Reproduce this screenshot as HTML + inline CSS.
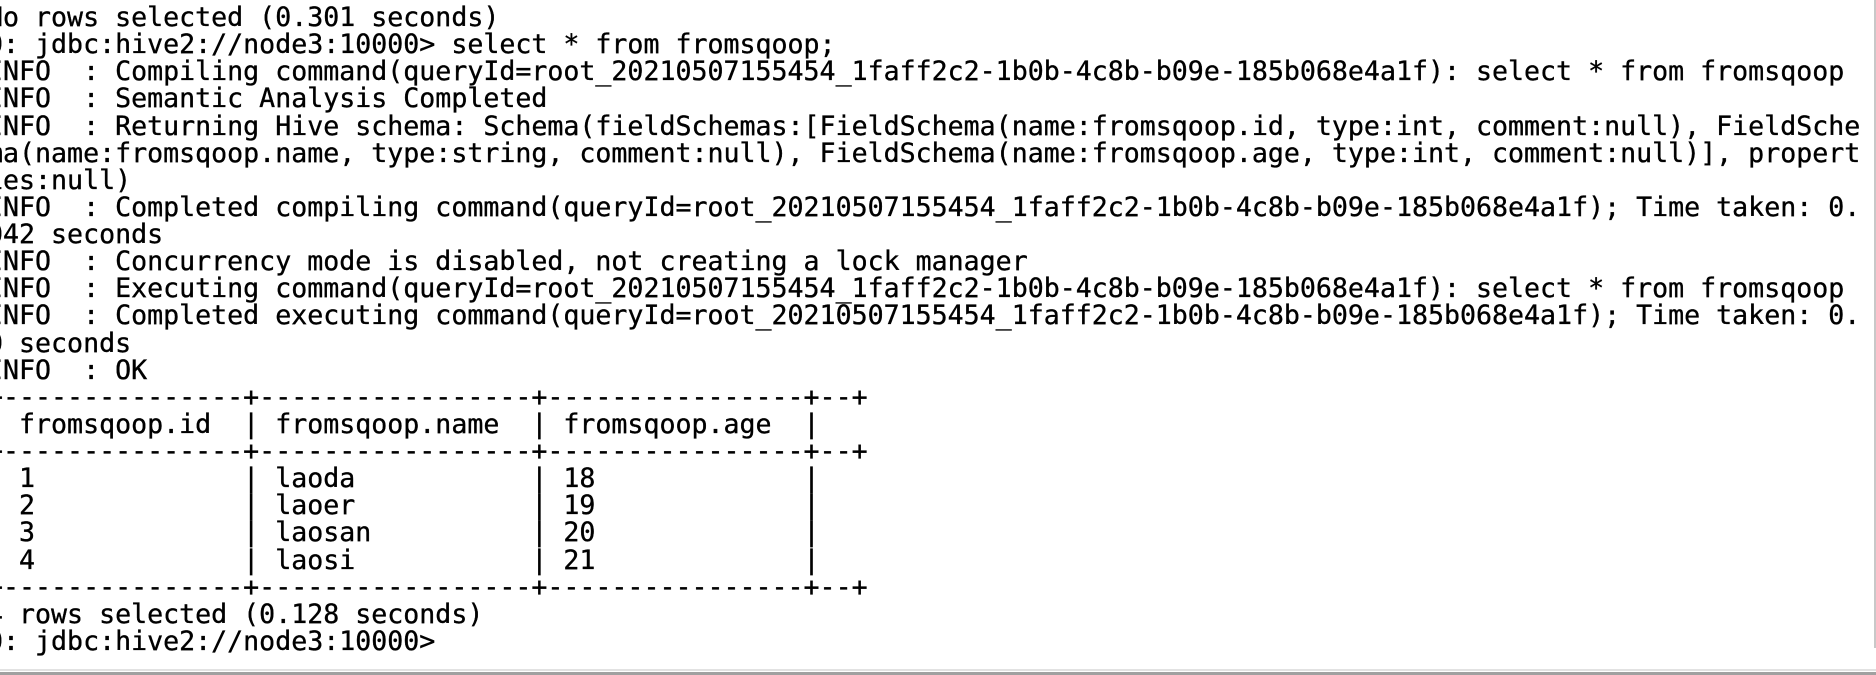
<!DOCTYPE html>
<html><head><meta charset="utf-8"><style>
html,body{margin:0;padding:0;width:1876px;height:675px;overflow:hidden;background:#fff;}
pre{position:absolute;left:-13px;top:4px;margin:0;font-family:"DejaVu Sans Mono","Liberation Mono",monospace;font-size:26.6px;line-height:27.13px;color:#000;white-space:pre;-webkit-text-stroke:0.35px #000;}
.r{position:absolute;right:0;top:0;width:2px;height:648px;background:#c8c8c8;}
.b1{position:absolute;left:0;top:669px;width:1876px;height:2px;background:#e2e2e2;}
.b2{position:absolute;left:0;top:672px;width:1876px;height:3px;background:#a0a0a0;}
</style></head><body>
<pre>No rows selected (0.301 seconds)
0: jdbc:hive2://node3:10000&gt; select * from fromsqoop;
INFO  : Compiling command(queryId=root_20210507155454_1faff2c2-1b0b-4c8b-b09e-185b068e4a1f): select * from fromsqoop
INFO  : Semantic Analysis Completed
INFO  : Returning Hive schema: Schema(fieldSchemas:[FieldSchema(name:fromsqoop.id, type:int, comment:null), FieldSche
ma(name:fromsqoop.name, type:string, comment:null), FieldSchema(name:fromsqoop.age, type:int, comment:null)], propert
ies:null)
INFO  : Completed compiling command(queryId=root_20210507155454_1faff2c2-1b0b-4c8b-b09e-185b068e4a1f); Time taken: 0.
042 seconds
INFO  : Concurrency mode is disabled, not creating a lock manager
INFO  : Executing command(queryId=root_20210507155454_1faff2c2-1b0b-4c8b-b09e-185b068e4a1f): select * from fromsqoop
INFO  : Completed executing command(queryId=root_20210507155454_1faff2c2-1b0b-4c8b-b09e-185b068e4a1f); Time taken: 0.
0 seconds
INFO  : OK
+---------------+-----------------+----------------+--+
| fromsqoop.id  | fromsqoop.name  | fromsqoop.age  |
+---------------+-----------------+----------------+--+
| 1             | laoda           | 18             |
| 2             | laoer           | 19             |
| 3             | laosan          | 20             |
| 4             | laosi           | 21             |
+---------------+-----------------+----------------+--+
4 rows selected (0.128 seconds)
0: jdbc:hive2://node3:10000&gt;</pre>
<div class="r"></div><div class="b1"></div><div class="b2"></div>
</body></html>
